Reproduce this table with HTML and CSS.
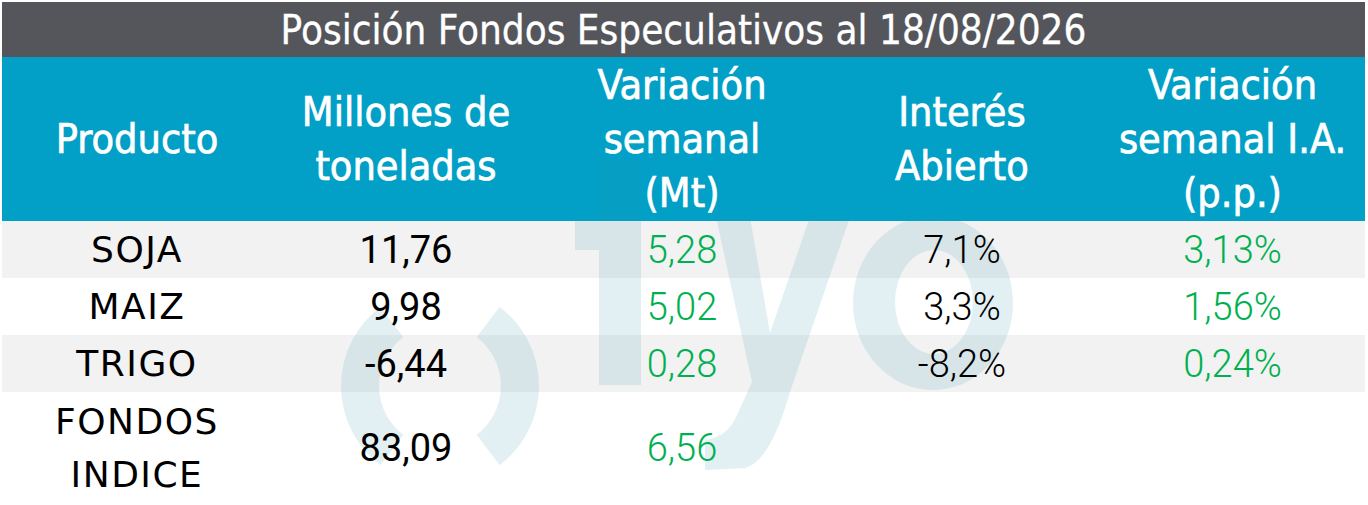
FILE: index.html
```html
<!DOCTYPE html>
<html lang="es">
<head>
<meta charset="utf-8">
<title>Posición Fondos Especulativos</title>
<link rel="stylesheet" href="styles.css">
</head>
<body>
<div class="sheet">
  <div class="title"><span>Posición Fondos Especulativos al 18/08/2026</span></div>
  <div class="row head">
    <div class="cell"><span>Producto</span></div>
    <div class="cell"><span>Millones de<br>toneladas</span></div>
    <div class="cell"><span>Variación<br>semanal<br>(Mt)</span></div>
    <div class="cell"><span>Interés<br>Abierto</span></div>
    <div class="cell"><span>Variación<br>semanal I.A.<br>(p.p.)</span></div>
  </div>
  <div class="row body shade">
    <div class="cell name"><span>SOJA</span></div>
    <div class="cell num"><span>11,76</span></div>
    <div class="cell num pos"><span>5,28</span></div>
    <div class="cell num thin"><span>7,1%</span></div>
    <div class="cell num pos"><span>3,13%</span></div>
  </div>
  <div class="row body">
    <div class="cell name"><span>MAIZ</span></div>
    <div class="cell num"><span>9,98</span></div>
    <div class="cell num pos"><span>5,02</span></div>
    <div class="cell num thin"><span>3,3%</span></div>
    <div class="cell num pos"><span>1,56%</span></div>
  </div>
  <div class="row body shade">
    <div class="cell name"><span>TRIGO</span></div>
    <div class="cell num"><span>-6,44</span></div>
    <div class="cell num pos"><span>0,28</span></div>
    <div class="cell num thin"><span>-8,2%</span></div>
    <div class="cell num pos"><span>0,24%</span></div>
  </div>
  <div class="row body tall">
    <div class="cell name"><span>FONDOS<br>INDICE</span></div>
    <div class="cell num"><span>83,09</span></div>
    <div class="cell num pos"><span>6,56</span></div>
    <div class="cell num thin"><span></span></div>
    <div class="cell num pos"><span></span></div>
  </div>
  <svg class="watermark" viewBox="0 0 1368 505" aria-hidden="true">
    <g fill="rgb(40,147,178)" stroke="rgb(40,147,178)">
      <path d="M 391.9 322.1 A 80 80 0 0 0 391.9 449.9" fill="none" stroke-width="38"/>
      <path d="M 488.1 322.1 A 80 80 0 0 1 488.1 449.9" fill="none" stroke-width="38"/>
      <path stroke="none" d="M 599 160 L 641 160 L 641 385 L 599 385 L 599 250 L 575 250 L 575 218 L 599 218 Z"/>
      <path stroke="none" d="M 716 217 L 750 217 L 770 333 L 810 217 L 850 217 L 790 392 Q 770 462 745 468 L 705 470 L 705 440 Q 728 437 737 415 L 752 382 Z"/>
      <path stroke="none" fill-rule="evenodd" d="M 853 303 A 80 87 0 1 0 1013 303 A 80 87 0 1 0 853 303 Z M 895 302 A 39 52 0 1 0 973 302 A 39 52 0 1 0 895 302 Z"/>
    </g>
  </svg>
</div>
</body>
</html>
```

FILE: styles.css
```css
html, body {
  margin: 0;
  padding: 0;
  background: #ffffff;
}

body {
  width: 1368px;
  height: 505px;
  overflow: hidden;
}

.sheet {
  position: relative;
  margin: 2px 0 0 2px;
  width: 1363px;
}

.title {
  height: 55px;
  background: #54565b;
  color: #ffffff;
  display: flex;
  align-items: center;
  justify-content: center;
  font-family: "DejaVu Sans Condensed", "DejaVu Sans", sans-serif;
  font-size: 40px;
  -webkit-text-stroke: 0.3px #ffffff;
}

.title span,
.cell span {
  position: relative;
  z-index: 2;
}

.row {
  display: grid;
  grid-template-columns: 270px 268px 284px 276px 265px;
}

.cell {
  display: flex;
  align-items: center;
  justify-content: center;
  text-align: center;
}

.head {
  height: 164px;
  background: #02a0c6;
  color: #ffffff;
  font-family: "DejaVu Sans Condensed", "DejaVu Sans", sans-serif;
  font-size: 41px;
  line-height: 54px;
  -webkit-text-stroke: 0.7px #ffffff;
}

.body {
  height: 57px;
  background: #ffffff;
}

.body.shade {
  background: #f2f2f2;
}

.body.tall {
  height: 112px;
}

.name {
  font-family: "DejaVu Sans", sans-serif;
  font-size: 36px;
  line-height: 53px;
  letter-spacing: 1.5px;
  color: #000000;
}

.num {
  font-family: Roboto, "Liberation Sans", sans-serif;
  font-size: 38px;
  font-weight: 400;
  color: #000000;
}

.num.thin {
  font-weight: 300;
}

.num.pos {
  font-weight: 300;
  color: #00b050;
}

.watermark {
  position: absolute;
  left: -2px;
  top: -2px;
  width: 1368px;
  height: 505px;
  z-index: 1;
  opacity: 0.13;
  pointer-events: none;
}
```
